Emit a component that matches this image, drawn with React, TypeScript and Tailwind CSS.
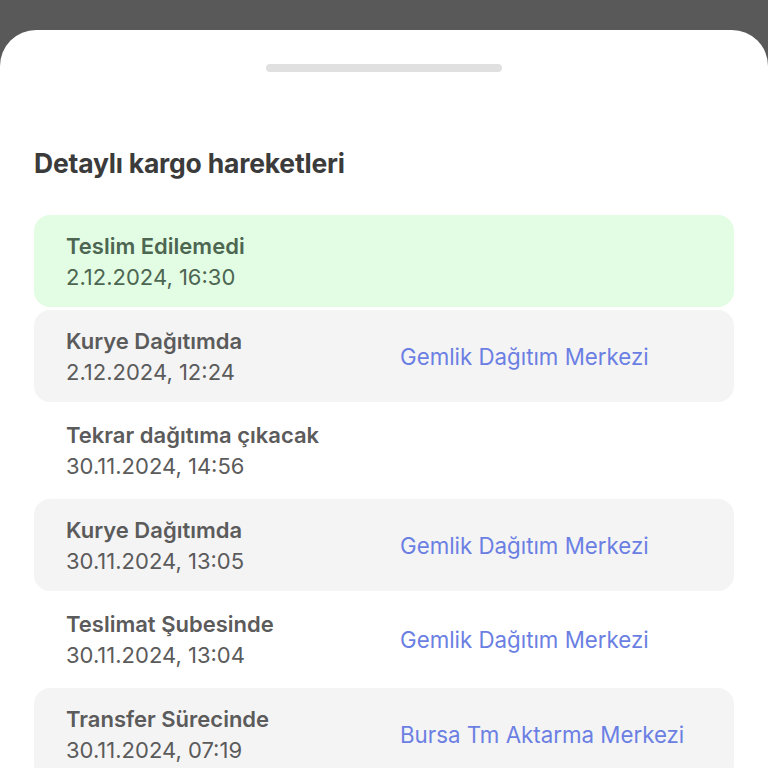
import React from 'react'

type Movement = {
  status: string
  date: string
  place?: string
  tone: 'green' | 'gray' | 'white'
}

const movements: Movement[] = [
  { status: 'Teslim Edilemedi', date: '2.12.2024, 16:30', tone: 'green' },
  { status: 'Kurye Dağıtımda', date: '2.12.2024, 12:24', place: 'Gemlik Dağıtım Merkezi', tone: 'gray' },
  { status: 'Tekrar dağıtıma çıkacak', date: '30.11.2024, 14:56', tone: 'white' },
  { status: 'Kurye Dağıtımda', date: '30.11.2024, 13:05', place: 'Gemlik Dağıtım Merkezi', tone: 'gray' },
  { status: 'Teslimat Şubesinde', date: '30.11.2024, 13:04', place: 'Gemlik Dağıtım Merkezi', tone: 'white' },
  { status: 'Transfer Sürecinde', date: '30.11.2024, 07:19', place: 'Bursa Tm Aktarma Merkezi', tone: 'gray' },
]

const toneClass = {
  green: 'bg-[#e2fde3] text-[#4d6652]',
  gray: 'bg-[#f4f4f5] text-[#5b5b5b]',
  white: 'bg-white text-[#5b5b5b]',
}

export default function App() {
  return (
    <div className="h-[768px] w-[768px] overflow-hidden bg-[#595959] pt-[30px] font-['Inter',sans-serif]">
      <div className="h-full rounded-t-[36px] bg-white">
        <div className="flex justify-center pt-[34px]">
          <div className="h-[8px] w-[236px] rounded-full bg-[#e0e0e0]" />
        </div>

        <h2 className="mt-[76px] px-[34px] text-[26.5px] font-bold leading-[30px] tracking-[-0.2px] text-[#3b3b3b]">
          Detaylı kargo hareketleri
        </h2>

        <div className="mt-[37px] flex flex-col gap-[2.5px] px-[34px]">
          {movements.map((m, i) => (
            <div
              key={i}
              className={`flex h-[92px] items-center rounded-[16px] px-[32px] ${toneClass[m.tone]}`}
            >
              <div className="w-[334px] shrink-0 pt-[2px]">
                <div className="text-[22px] font-semibold leading-[31px]">{m.status}</div>
                <div className="text-[22px] leading-[31px]">{m.date}</div>
              </div>
              {m.place && <div className="pt-[2px] text-[22.3px] text-[#6b7fe3]">{m.place}</div>}
            </div>
          ))}
        </div>
      </div>
    </div>
  )
}
